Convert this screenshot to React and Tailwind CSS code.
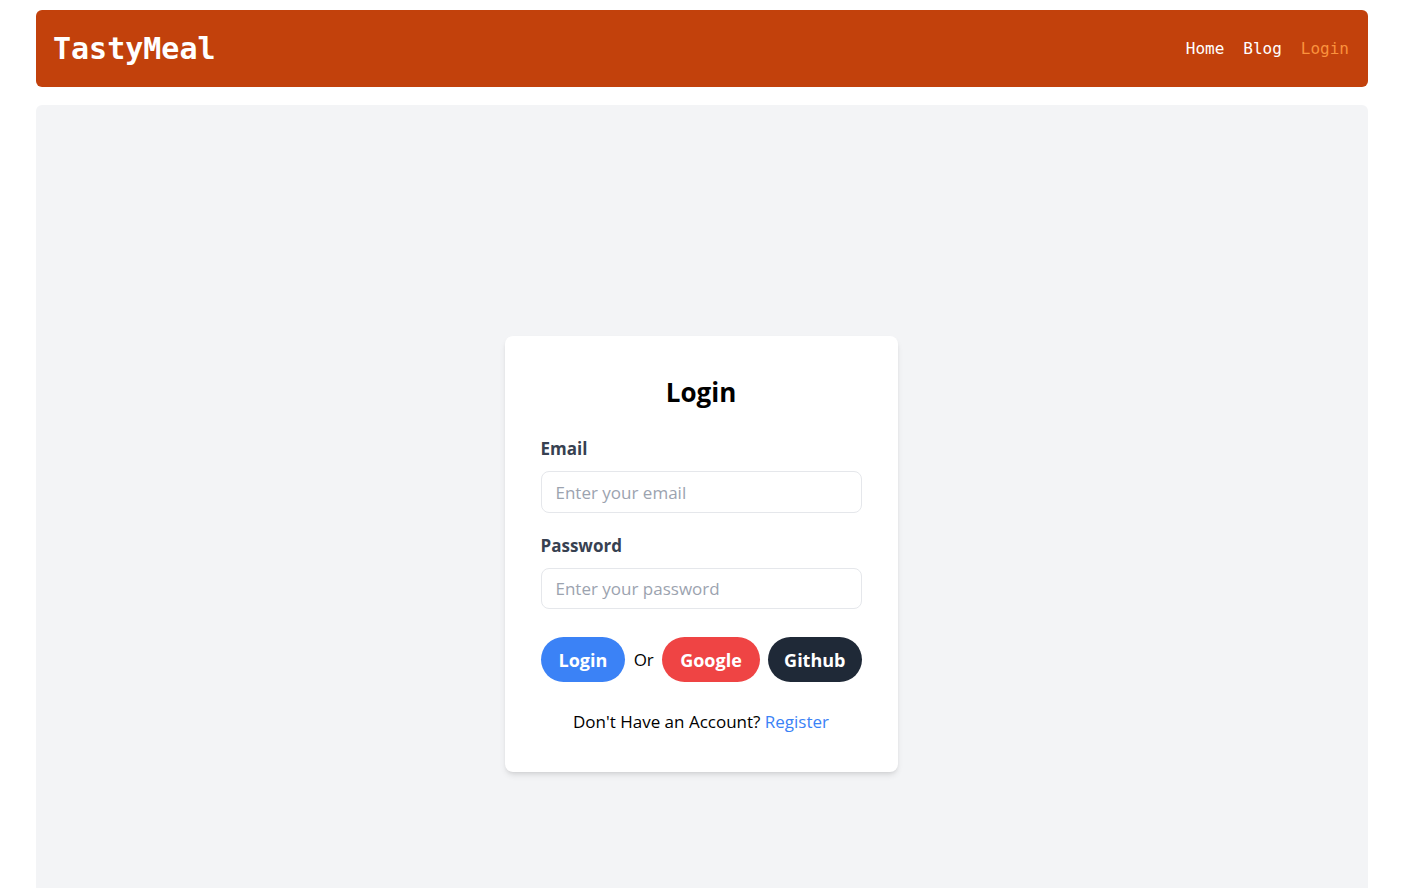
// App.jsx
export default function App() {
  return (
    <div className="min-h-screen bg-white" style={{ fontFamily: '"Open Sans", "Noto Sans", sans-serif' }}>
      {/* Navbar */}
      <header className="mx-9 mt-[10px] h-[77px] bg-[#c2410c] rounded-md flex items-center justify-between pl-[17px] pr-[19px] font-['DejaVu_Sans_Mono',monospace]">
        <h1 className="text-[30px] font-bold text-white">TastyMeal</h1>
        <nav className="flex gap-[19px] text-base pt-px">
          <a className="text-white">Home</a>
          <a className="text-white">Blog</a>
          <a className="text-[#fb923c]">Login</a>
        </nav>
      </header>

      {/* Main */}
      <main className="mx-9 mt-[18px] h-[898px] bg-[#f3f4f6] rounded-t-md flex items-center justify-center">
        <div className="w-[393px] bg-white rounded-lg shadow-md px-9 pt-10 pb-[38px] -translate-x-px">
          <h2 className="text-[26px] leading-8 font-bold text-center text-black">Login</h2>

          <label className="block mt-[29px] text-[17px] leading-6 font-bold text-[#374151]">Email</label>
          <input
            type="email"
            placeholder="Enter your email"
            className="mt-[10px] w-full h-[42px] px-[14px] text-[17px] border border-[#e5e7eb] rounded-lg placeholder:text-[#9ca3af] outline-none"
          />

          <label className="block mt-[21px] text-[17px] leading-6 font-bold text-[#374151]">Password</label>
          <input
            type="password"
            placeholder="Enter your password"
            className="mt-[10px] w-full h-[41px] px-[14px] text-[17px] border border-[#e5e7eb] rounded-lg placeholder:text-[#9ca3af] outline-none"
          />

          <div className="mt-7 flex items-center justify-between">
            <button className="h-[45px] px-[18px] rounded-full bg-[#3b82f6] text-white text-lg font-bold">Login</button>
            <span className="text-[17px] text-black">Or</span>
            <button className="h-[45px] px-[18px] rounded-full bg-[#ef4444] text-white text-lg font-bold">Google</button>
            <button className="h-[45px] px-4 rounded-full bg-[#1f2937] text-white text-lg font-bold">Github</button>
          </div>

          <p className="mt-7 text-center text-[17px] leading-6 text-black">
            Don't Have an Account? <a className="text-[#3b82f6]">Register</a>
          </p>
        </div>
      </main>
    </div>
  );
}
